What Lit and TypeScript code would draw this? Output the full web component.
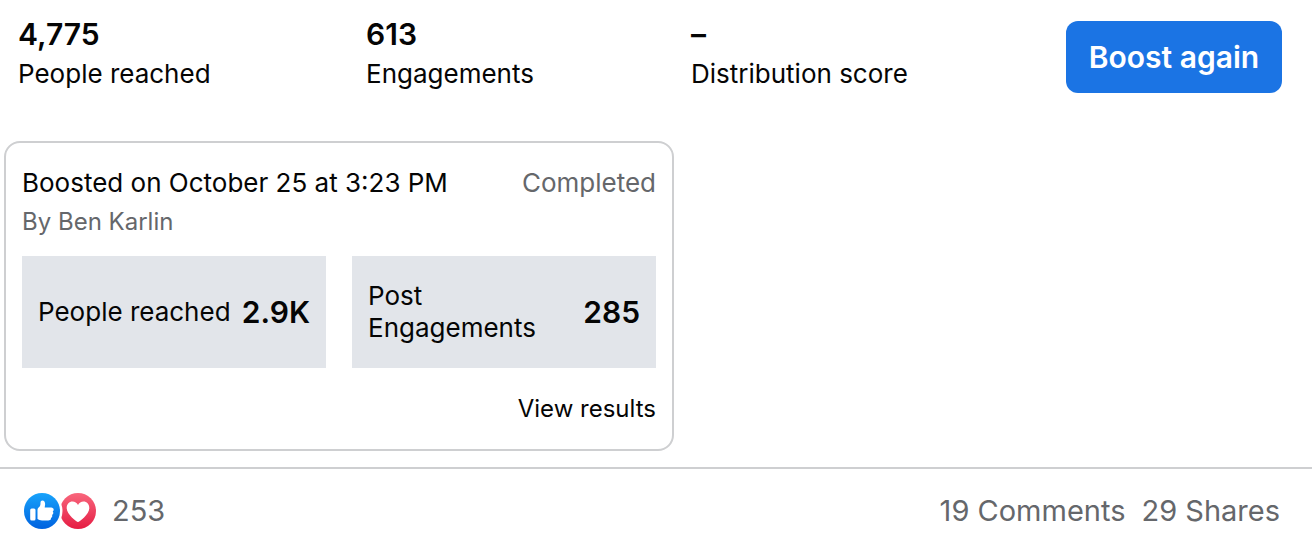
import { LitElement, html, css } from "lit";
import { customElement } from "lit/decorators.js";

@customElement("app-root")
export class AppRoot extends LitElement {
  static styles = css`
    :host { display: block; background: #fff; color: #050505; font-family: Inter, "Liberation Sans", sans-serif; font-size: 26px; line-height: 32px; }
    * { box-sizing: border-box; }
    button { font: inherit; border: 0; cursor: pointer; }
    .summary { display: grid; grid-template-columns: 348fr 325fr 375fr 216px; padding: 14px 30px 0 18px; align-items: start; }
    .value { font-size: 30px; line-height: 40px; font-weight: 600; }
    .label { line-height: 40px; }
    .boost { margin-top: 7px; height: 72px; border-radius: 12px; background: #1b74e4; color: #fff; font-size: 30px; font-weight: 600; padding: 0; white-space: nowrap; }
    .card { width: 670px; max-width: 100%; margin: 47px 0 16px 4px; border: 2px solid #cecfd1; border-radius: 16px; padding: 24px 16px; }
    .row { display: flex; justify-content: space-between; }
    .muted { color: #65676b; }
    .by { font-size: 24px; line-height: 32px; margin-top: 7px; }
    .tiles { display: grid; grid-template-columns: 1fr 1fr; gap: 26px; margin-top: 18px; }
    .tile { display: flex; align-items: center; justify-content: space-between; background: #e2e5ea; height: 112px; padding: 0 16px; gap: 8px; }
    .actions { display: flex; justify-content: flex-end; margin-top: 25px; }
    .view { color: inherit; text-decoration: none; font-size: 24px; }
    .footer { display: flex; align-items: center; justify-content: space-between; border-top: 2px solid #cecfd1; padding: 22px 32px 14px 22px; font-size: 29px; line-height: 40px; color: #65676b; }
    .reactions, .counts { display: flex; align-items: center; gap: 16px; }
    .icons { display: block; width: 74px; height: 40px; }
  `;
  render() {
    return html`
      <section class="summary">
        <div><div class="value">4,775</div><div class="label">People reached</div></div>
        <div><div class="value">613</div><div class="label">Engagements</div></div>
        <div><div class="value">–</div><div class="label">Distribution score</div></div>
        <button class="boost">Boost again</button>
      </section>
      <section class="card">
        <div class="row"><span>Boosted on October 25 at 3:23 PM</span><span class="muted">Completed</span></div>
        <div class="by muted">By Ben Karlin</div>
        <div class="tiles">
          <div class="tile"><span>People reached</span><span class="value">2.9K</span></div>
          <div class="tile"><span>Post Engagements</span><span class="value">285</span></div>
        </div>
        <div class="actions"><a class="view" href="#">View results</a></div>
      </section>
      <footer class="footer">
        <div class="reactions">
          <svg class="icons" viewBox="0 0 74 40" role="img" aria-label="Like and Love">
            <defs>
              <linearGradient id="like" x1="0" y1="0" x2="0" y2="1"><stop offset="0" stop-color="#18a3fb" /><stop offset="1" stop-color="#0062df" /></linearGradient>
              <linearGradient id="love" x1="0" y1="0" x2="0" y2="1"><stop offset="0" stop-color="#f9667c" /><stop offset="0.500" stop-color="#ee4261" /><stop offset="1" stop-color="#e61c42" /></linearGradient>
            </defs>
            <circle cx="56" cy="20" r="18" fill="url(#love)" />
            <path fill="#fff" d="M56 31c-1.200 0-11.300-7.500-11.300-14c0-4 2.600-6.500 5.800-6.500c2.300 0 4.500 1.300 5.500 3.500c1-2.200 3.200-3.500 5.500-3.500c3.200 0 5.800 2.500 5.800 6.500C67.300 23.500 57.200 31 56 31z" />
            <circle cx="20" cy="20" r="20.500" fill="#fff" />
            <circle cx="20" cy="20" r="18" fill="url(#like)" />
            <rect x="8.200" y="17.500" width="5.300" height="12" rx="1.500" fill="#fff" />
            <path fill="#fff" transform="translate(0 0.700)" d="M15.500 18.200c0-1 .4-1.600 1.100-2.300c1.500-1.400 2-2.600 1.900-5.200c0-1.300.8-2 1.900-2c2 0 2.900 1.900 2.700 4.200l-.4 2.900h6.500c1.500 0 2.500 1 2.500 2.200c0 .8-.4 1.400-1 1.800c.5.500.7 1 .6 1.700c-.1.900-.6 1.500-1.300 1.800c.3.500.4 1 .2 1.600c-.2.700-.7 1.200-1.300 1.400c.1.300.1.700 0 1c-.3 1-1.200 1.400-2.600 1.400h-6.300c-1.800 0-3.400-.5-4.500-1.400z" />
          </svg>
          <span>253</span>
        </div>
        <div class="counts"><span>19 Comments</span><span>29 Shares</span></div>
      </footer>
    `;
  }
}
